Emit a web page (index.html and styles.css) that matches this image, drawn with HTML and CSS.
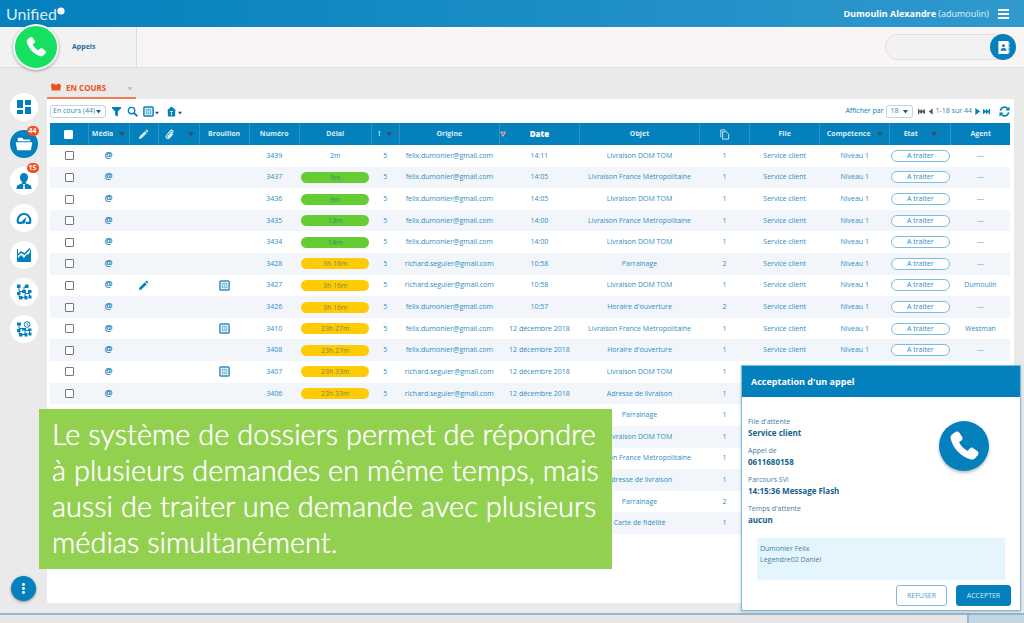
FILE: index.html
```html
<!DOCTYPE html>
<html lang="fr">
<head>
<meta charset="utf-8">
<meta name="viewport" content="width=device-width, initial-scale=1">
<title>Unified - Dossiers en cours</title>
<link rel="stylesheet" href="styles.css">
</head>
<body>
<svg class="sprite" aria-hidden="true">
  <symbol id="i-phone" viewBox="0 0 24 24"><path d="M3.2 3.2 5.8 1.4c.9-.6 2-.4 2.6.5l2.2 3.3c.6.9.3 2-.5 2.6L8.300 9c1.200 2.900 3.600 5.300 6.500 6.700l1.500-1.800c.7-.8 1.800-1 2.700-.3l3.100 2.400c.9.7 1 1.900.3 2.700l-2.100 2.400c-.9 1-2.200 1.300-3.500.9C9.400 19.800 3.900 13.900 2 6.600c-.3-1.300.1-2.600 1.200-3.400Z"/></symbol>
  <symbol id="i-pencil" viewBox="0 0 12 12"><path d="M1 11l.6-2.700L7.500 2.400l2.100 2.100-5.900 5.900ZM8.100 1.800l.6-.6c.4-.4 1-.4 1.400 0l.7.7c.4.4.4 1 0 1.400l-.6.6Z"/></symbol>
  <symbol id="i-draft" viewBox="0 0 12 12"><rect x="1" y="1" width="10" height="10" rx="1" fill="none" stroke="currentColor" stroke-width="1.600"/><path d="M3.500 3.500h5v5h-5Z" fill="none" stroke="currentColor" stroke-width=".8"/><path d="M5 5h2v1H5ZM5 7h2v.7H5Z"/></symbol>
  <symbol id="i-caret" viewBox="0 0 8 8"><path d="M0 1.500h8L4 7Z"/></symbol>
</svg>

<header class="topbar">
  <div class="brand">Unified<svg class="brand-dot" viewBox="0 0 10 10"><circle cx="5" cy="5" r="4.500" fill="#fff"/><path d="m3 5 1.500 1.500L7 4" fill="none" stroke="#9ccbe5"/></svg></div>
  <div class="user"><strong>Dumoulin Alexandre</strong> (adumoulin)</div>
  <button class="menu" aria-label="Menu"><span></span><span></span><span></span></button>
</header>

<div class="subbar">
  <div class="calls">
    <button class="call-btn" aria-label="Téléphone"><svg viewBox="0 0 24 24"><use href="#i-phone"/></svg></button>
    <span>Appels</span>
  </div>
  <div class="search">
    <input type="text" aria-label="Rechercher">
    <button aria-label="Contacts"><svg viewBox="0 0 14 14"><path d="M1.500 0h11v14h-11Z" fill="#fff"/><path d="M12.500 2h1v2h-1zM12.500 6h1v2h-1zM12.500 10h1v2h-1z" fill="#fff"/><circle cx="7" cy="5" r="1.600" fill="#0480bc"/><path d="M4 10.500V9l2-1.500h2L10 9v1.500Z" fill="#0480bc"/></svg></button>
  </div>
</div>

<div class="workspace">
  <nav class="rail">
    <button aria-label="Tableau de bord"><svg viewBox="0 0 16 16"><path d="M1 1h6v8H1zM9 1h6v5H9zM1 11h6v4H1zM9 8h6v7H9z"/></svg></button>
    <button class="active" aria-label="Dossiers"><svg viewBox="0 0 20 16"><path d="M3 5V2.500C3 1.500 3.500 1 4.500 1H8l1.500 2h6c1 0 1.500.5 1.500 1.500V5ZM.8 6h18.400l-1.400 8c-.1.700-.6 1-1.300 1h-13c-.7 0-1.200-.3-1.300-1Z"/></svg><span class="badge">44</span></button>
    <button aria-label="Clients"><svg viewBox="0 0 16 16"><path d="M8 0c2.500 0 4 1.800 4 4.300 0 2.300-1 4-2.200 4.900v1.100L14 12c1 .5 1.500 1.500 1.500 4H9l-.4-3.500.6-1.500H6.800l.6 1.500L7 16H.5C.5 13.500 1 12.500 2 12l4.200-1.700V9.200C5 8.300 4 6.600 4 4.300 4 1.800 5.500 0 8 0Z"/></svg><span class="badge">15</span></button>
    <button aria-label="Supervision"><svg viewBox="0 0 18 16"><path d="M2.300 13.500C1 9 3.500 3.500 9 3.500s8 5.500 6.700 10H11" fill="none" stroke="currentColor" stroke-width="2.400"/><path d="M2 12.300h5v2.400H2ZM11.500 6.500l-1 5.500a2 2 0 1 1-2.600-1.500Z"/></svg></button>
    <button aria-label="Statistiques"><svg viewBox="0 0 16 16"><path d="M1.500 2v12.500h13V3" fill="none" stroke="currentColor"/><path d="m2 8 3-3 3.500 2L14 1.500" fill="none" stroke="currentColor" stroke-width="1.500"/><path d="M2 14v-3l3-3 3 3 3-4 1 1 2-3v9Z"/></svg></button>
    <button aria-label="Flux"><svg viewBox="0 0 16 16"><path d="M3 3v4.500h5M8 7V3h3M3 9.500V13M5 13.500h4V9.500h4.500V12" fill="none" stroke="currentColor"/><path d="M1 .5h3.500V4H1zM9 .5h3.500V4H9zM6 6h4v3H6zM1 8h3.500v3H1zM12 6h3.500v3H12zM3 12h3.500v3.500H3zM8.500 12h3v3.500h-3zM12.500 11.500h3v3h-3z"/></svg></button>
    <button aria-label="Scénarios"><svg viewBox="0 0 16 16"><path d="M3 3v4.500h5M3 9.500V13M5 13.500h4V9.500h4.500V12" fill="none" stroke="currentColor"/><circle cx="11" cy="3.500" r="2.800" fill="none" stroke="currentColor"/><path d="M11 2v2h1.500" fill="none" stroke="currentColor" stroke-width=".8"/><path d="M1 1.500h4v3H1zM6 7h4v2.500H6zM1 8h3.500v3H1zM12 7.500h3.500v2.500H12zM3 12h3.500v3.500H3zM8.500 12h3v3.500h-3zM12.500 11.500h3v3h-3z"/></svg></button>
    <button class="more" aria-label="Plus"><svg viewBox="0 0 16 16"><circle cx="8" cy="3" r="1.800"/><circle cx="8" cy="8" r="1.800"/><circle cx="8" cy="13" r="1.800"/></svg></button>
  </nav>

  <main class="content">
    <div class="tab">
      <svg viewBox="0 0 12 10"><path d="M0 2c0-.6.400-1 1-1h3l1 1h2l1-1h2c.6 0 1 .4 1 1v.5h.5c.4 0 .6.300.5.700L11.200 8.500c-.1.300-.4.500-.7.500h-9c-.3 0-.6-.2-.7-.5Z"/></svg>
      <span>EN COURS</span>
      <button aria-label="Fermer">×</button>
    </div>
    <section class="panel">
      <div class="toolbar">
        <label class="picker filter"><select aria-label="Filtre"><option>En cours (44)</option></select><svg viewBox="0 0 8 8"><use href="#i-caret"/></svg></label>
        <button aria-label="Filtrer"><svg viewBox="0 0 12 12"><path d="M1 1h10v1.500L7.500 6v5.500L4.500 10V6L1 2.500Z"/></svg></button>
        <button aria-label="Chercher"><svg viewBox="0 0 12 12"><circle cx="5" cy="5" r="3.500" fill="none" stroke="currentColor" stroke-width="1.500"/><path d="m7.500 7.500 3.700 3.700" stroke="currentColor" stroke-width="2"/></svg></button>
        <button class="drop" aria-label="Dossier"><svg viewBox="0 0 12 12"><use href="#i-draft"/></svg><svg class="mini" viewBox="0 0 8 8"><use href="#i-caret"/></svg></button>
        <button class="drop" aria-label="Verrou"><svg viewBox="0 0 12 12"><path d="M6 .5 11 5H10v6.500H2V5H1Z"/><path d="M4.500 6h3M6 7v3" stroke="#fff"/></svg><svg class="mini" viewBox="0 0 8 8"><use href="#i-caret"/></svg></button>
        <div class="pager">
          <label for="size">Afficher par</label>
          <span class="picker size"><select id="size"><option>18</option></select><svg viewBox="0 0 8 8"><use href="#i-caret"/></svg></span>
          <button class="off first" aria-label="Première page"><svg viewBox="0 0 8 8"><path d="M0 1h1.500v2.500L4.500 1v2.500L8 1v6L4.500 4.500V7l-3-2.500V7H0Z"/></svg></button>
          <button class="off" aria-label="Page précédente"><svg viewBox="0 0 8 8"><path d="M6.500.5v7L2 4Z"/></svg></button>
          <span>1-18 sur 44</span>
          <button aria-label="Page suivante"><svg viewBox="0 0 8 8"><path d="M1.500 0v8L7 4Z"/></svg></button>
          <button aria-label="Dernière page"><svg viewBox="0 0 8 8"><path d="M8 1H6.500v2.500L3.500 1v2.500L0 1v6l3.500-2.500V7l3-2.500V7H8Z"/></svg></button>
          <button class="refresh" aria-label="Actualiser"><svg viewBox="0 0 12 12"><path d="M1.500 5A4.500 4.500 0 0 1 9.500 3M10.500 7a4.500 4.500 0 0 1-8 2" fill="none" stroke="currentColor" stroke-width="1.800"/><path d="M11.500.5V5H7ZM.5 11.500V7H5Z"/></svg></button>
        </div>
      </div>

      <table class="cases">
        <colgroup><col class="c-check"><col class="c-media"><col class="c-edit"><col class="c-media"><col class="c-mid"><col class="c-mid"><col class="c-delay"><col class="c-prio"><col class="c-origin"><col class="c-date"><col class="c-object"><col class="c-mid"><col class="c-queue"><col class="c-queue"><col class="c-state"><col class="c-agent"></colgroup>
        <thead><tr>
          <th><input type="checkbox" aria-label="Tout sélectionner"></th>
          <th><div class="head">Média<svg class="caret" viewBox="0 0 8 8"><use href="#i-caret"/></svg></div></th>
          <th><svg class="glyph" viewBox="0 0 12 12"><use href="#i-pencil"/></svg></th>
          <th><div class="head wide"><svg class="glyph" viewBox="0 0 12 12"><path d="M8.500 3 4.500 8c-.5.700.3 1.400.9.800L9.300 4c1.400-1.900-.9-3.600-2.300-2L3 6.800c-2 2.600 1.200 5 3.200 2.700L9.500 5.500" fill="none" stroke="currentColor" stroke-width="1.200"/></svg><svg class="caret" viewBox="0 0 8 8"><use href="#i-caret"/></svg></div></th>
          <th>Brouillon</th><th>Numéro</th><th>Délai</th>
          <th><div class="head">!<svg class="caret" viewBox="0 0 8 8"><use href="#i-caret"/></svg></div></th>
          <th>Origine</th>
          <th><div class="head sorted"><svg class="caret" viewBox="0 0 8 8"><path d="M0 1h8L4 8Z" fill="#b8d8ea"/><path d="M1.500 2h5L4 6Z" fill="#f0501e"/></svg><b>Date</b></div></th>
          <th>Objet</th>
          <th><svg class="glyph" viewBox="0 0 12 12"><path d="M4 3h4l2.500 2.500V11H4ZM2 9V1h5" fill="none" stroke="currentColor"/></svg></th>
          <th>File</th>
          <th><div class="head">Compétence<svg class="caret" viewBox="0 0 8 8"><use href="#i-caret"/></svg></div></th>
          <th><div class="head wide">Etat<svg class="caret" viewBox="0 0 8 8"><use href="#i-caret"/></svg></div></th>
          <th>Agent</th>
        </tr></thead>
        <tbody id="rows"></tbody>
      </table>
    </section>
  </main>
</div>
<footer class="frame-end"><div></div></footer>

<p class="caption">Le système de dossiers permet de répondre<br>à plusieurs demandes en même temps, mais<br>aussi de traiter une demande avec plusieurs<br>médias simultanément.</p>

<div class="dialog" role="dialog" aria-labelledby="dlg">
  <h2 id="dlg">Acceptation d'un appel</h2>
  <div class="dialog-body">
    <dl>
      <dt>File d'attente</dt><dd>Service client</dd>
      <dt>Appel de</dt><dd>0611680158</dd>
      <dt>Parcours SVI</dt><dd>14:15:36 Message Flash</dd>
      <dt>Temps d'attente</dt><dd>aucun</dd>
    </dl>
    <div class="ring"><svg viewBox="0 0 24 24"><use href="#i-phone"/></svg></div>
  </div>
  <div class="people">Dumonier Felix<br>Legendre02 Daniel</div>
  <div class="actions"><button>REFUSER</button><button class="primary">ACCEPTER</button></div>
</div>
<script src="app.js"></script>
</body>
</html>
```

FILE: styles.css
```css
:root { --blue: #0480bc; --text: #2f8dc1; --orange: #f0501e; }
* { box-sizing: border-box; }
body { margin: 0; min-height: 100vh; display: flex; flex-direction: column; position: relative; overflow: hidden; background: #eaeaea; color: var(--text); font: 7px/10px "Open Sans", "Noto Sans", sans-serif; }
button { border: 0; padding: 0; background: none; color: inherit; font: inherit; display: flex; align-items: center; justify-content: center; }
svg { display: block; fill: currentColor; }
.sprite { position: absolute; width: 0; height: 0; }

.topbar { height: 27px; display: flex; align-items: center; padding: 0 15px 0 6px; color: #fff; background: linear-gradient(90deg, #0480bc, #3099cd); }
.brand { display: flex; font: 16px/20px Lato, sans-serif; flex: 1; color: #d9edf7; }
.brand-dot { width: 8px; height: 8px; margin: 3px 0 0 0; }
.user { font-size: 9px; color: #e3f1f9; }
.user strong { color: #fff; }
.menu { flex-direction: column; gap: 2px; margin-left: 9px; }
.menu span { width: 11px; height: 2px; background: #fff; }

.subbar { height: 41px; display: flex; justify-content: space-between; align-items: center; background: #f9f5f4; border-bottom: 1px solid #e0dfdf; }
.calls { width: 137px; align-self: stretch; display: flex; align-items: center; gap: 13px; padding-left: 13px; background: #f2f2f2; border-right: 1px solid #dcdcdc; color: #1d6b98; font-weight: 700; }
.call-btn { width: 46px; height: 46px; flex: none; position: relative; z-index: 1; border: 2px solid #f6f6f6; border-radius: 50%; background: #16e060; color: #fff; box-shadow: 0 1px 3px #0005; }
.call-btn svg { width: 22px; }
.search { display: flex; width: 131px; margin-right: 8px; height: 26px; }
.search input { flex: 1; min-width: 0; border: 1px solid #e0e0e0; border-radius: 13px; background: #f2f2f2; margin-right: -24px; }
.search button { width: 26px; border-radius: 50%; background: var(--blue); position: relative; }
.search svg { width: 13px; }

.workspace { flex: 1; display: flex; }
.rail { width: 47px; display: flex; flex-direction: column; align-items: center; gap: 9px; padding: 25px 0 12px; color: var(--blue); }
.rail button { position: relative; width: 28px; height: 28px; border-radius: 50%; background: #fff; }
.rail svg { width: 16px; height: 16px; }
.rail .active, .rail .more { background: var(--blue); color: #fff; }
.rail .active svg { width: 18px; }
.rail .more { width: 25px; height: 25px; margin-top: auto; box-shadow: 0 1px 3px #0006; }
.rail .more svg { width: 13px; height: 13px; }
.badge { position: absolute; top: -4px; right: -1px; width: 12px; height: 10px; border-radius: 5px; background: var(--orange); color: #fff; font-weight: 700; }

.content { flex: 1; min-width: 0; display: flex; flex-direction: column; padding: 0 10px 10px 0; }
.tab { align-self: flex-start; width: 89px; height: 21px; margin-top: 10px; padding: 0 4px; display: flex; align-items: center; gap: 5px; border-bottom: 2px solid #f47a54; color: var(--orange); font-size: 8px; font-weight: 700; }
.tab svg { width: 10px; }
.tab button { margin-left: auto; color: #999; font-weight: 400; }
.panel { flex: 1; background: #fff; padding: 0 4px 0 3px; border-radius: 0 0 3px 3px; }
.toolbar { height: 24px; display: flex; align-items: center; gap: 5px; color: var(--blue); }
.toolbar > button svg { width: 11px; height: 11px; }
.toolbar .drop { gap: 1px; margin-right: 2px; }
.toolbar > .drop .mini { width: 4px; height: 4px; margin-top: 4px; color: #37515f; }
.picker { display: flex; align-items: center; border: 1px solid #b5d7e8; border-radius: 3px; height: 13px; padding: 0 4px 0 2px; }
.picker select { appearance: none; border: 0; padding: 0; background: none; color: #3d7fa3; font: 7px/10px "Open Sans", sans-serif; flex: 1; min-width: 0; }
.picker svg { width: 5px; height: 5px; color: #1c5c80; }
.filter { width: 56px; }
.size { width: 27px; padding-left: 4px; }
.pager { display: flex; align-items: center; gap: 2px; margin-left: auto; }
.pager button svg { width: 7px; height: 7px; }
.pager .off { color: #555; }
.pager .first { margin-left: 3px; }
.pager span { color: #3d7fa3; }
.pager .refresh { margin-left: 7px; }
.pager .refresh svg { width: 11px; height: 11px; }

.cases { width: 100%; height: 411px; table-layout: fixed; border-collapse: collapse; text-align: center; }
.cases th, .cases td { padding: 0; white-space: nowrap; }
.cases th { height: 22px; background: var(--blue); color: #d9edf7; border-right: 1px solid #2b94c8; }
.cases th:last-child { border-right: 0; }
.cases td { height: 21px; }
.cases tbody tr:nth-child(even) { background: #f2f6fb; }
.c-check { width: 38px; } .c-media { width: 41px; } .c-edit { width: 29px; } .c-mid { width: 50px; }
.c-delay { width: 72px; } .c-prio { width: 28px; } .c-origin { width: 100px; } .c-date { width: 80px; }
.c-object { width: 120px; } .c-queue { width: 70px; } .c-state { width: 61px; } .c-agent { width: 59px; }
.head { display: flex; align-items: center; justify-content: center; gap: 6px; }
.head.wide { gap: 13px; }
.head.sorted { display: grid; grid-template-columns: 6px 1fr 6px; gap: 0; font-size: 8px; color: #fff; }
.caret { width: 6px; height: 6px; color: #37515f; }
.glyph { width: 11px; height: 11px; margin: auto; }
.head .glyph { margin: 0; }
.cases input { appearance: none; display: block; width: 9px; height: 9px; margin: auto; border: 1px solid #777; border-radius: 1px; background: #fff; }
.cases th input { border-color: #fff; }
.at { display: block; font-size: 9px; line-height: 10px; font-weight: 700; padding-bottom: 2px; }
.edit { color: var(--blue); }
.delay { display: block; height: 11px; margin: 0 2px; border-radius: 6px; line-height: 11px; }
.delay.green { background: #66cc33; color: #338f5a; }
.delay.amber { background: #ffcb05; color: #7b8a45; }
.state { display: block; height: 12px; margin: 0 1px; border: 1px solid #7dbddd; border-radius: 6px; background: #fff; line-height: 10px; }

.frame-end { height: 10px; border-top: 2px solid #94b8d4; background: #e6e6e6; }
.frame-end div { height: 8px; width: 57px; margin-left: auto; background: #c3d6e2; border-left: 2px solid #94b8d4; }

.caption { position: absolute; left: 39px; top: 409px; width: 573px; margin: 0; padding: 7px 0 9px 13px; background: #92d050; color: #fff; font: 300 29px/36px Lato, sans-serif; text-shadow: 0 0 1px #fff; white-space: nowrap; }

.dialog { position: absolute; right: 3px; bottom: 12px; width: 280px; background: #fff; border: 1px solid #7dbddd; color: #47809e; box-shadow: 0 1px 3px #0003; }
.dialog h2 { margin: 0; padding: 0 9px; background: var(--blue); color: #fff; font-size: 9px; line-height: 31px; }
.dialog-body { display: flex; justify-content: space-between; padding: 19px 31px 0 6px; }
.dialog dl { margin: 0; font-size: 7px; line-height: 11px; }
.dialog dd { margin: 0 0 7px; color: #15618c; font-weight: 700; font-size: 8px; }
.ring { width: 50px; height: 50px; margin-top: 5px; border-radius: 50%; background: var(--blue); color: #fff; display: grid; place-items: center; box-shadow: 0 2px 3px #0004; }
.ring svg { width: 32px; }
.people { margin: 6px 15px 5px; height: 42px; padding: 5px 3px; line-height: 11px; background: #e4f5fd; }
.actions { display: flex; justify-content: flex-end; gap: 9px; padding: 0 9px 4px; }
.actions button { width: 51px; height: 21px; border: 1px solid #7dbddd; border-radius: 3px; color: #4c9dc8; }
.actions .primary { width: 55px; background: var(--blue); border-color: var(--blue); color: #d9edf7; }
```

FILE: app.js
```js
const FELIX = "felix.dumonier@gmail.com";
const RICHARD = "richard.seguier@gmail.com";
const DOM = "Livraison DOM TOM";
const METRO = "Livraison France Metropolitaine";
const DEC = "12 décembre 2018";

// number, delay, colour, origin, date, object, documents, agent, draft, edit
const cases = [
  [3439, "2m", "", FELIX, "14:11", DOM, 1, "---"],
  [3437, "9m", "green", FELIX, "14:05", METRO, 1, "---"],
  [3436, "9m", "green", FELIX, "14:05", DOM, 1, "---"],
  [3435, "13m", "green", FELIX, "14:00", METRO, 1, "---"],
  [3434, "14m", "green", FELIX, "14:00", DOM, 1, "---"],
  [3428, "3h 16m", "amber", RICHARD, "10:58", "Parrainage", 2, "---"],
  [3427, "3h 16m", "amber", RICHARD, "10:58", DOM, 1, "Dumoulin", true, true],
  [3426, "3h 16m", "amber", FELIX, "10:57", "Horaire d'ouverture", 2, "---"],
  [3410, "23h 27m", "amber", FELIX, DEC, METRO, 1, "Westman", true],
  [3408, "23h 27m", "amber", FELIX, DEC, "Horaire d'ouverture", 1, "---"],
  [3407, "23h 33m", "amber", RICHARD, DEC, DOM, 1, "", true],
  [3406, "23h 33m", "amber", RICHARD, DEC, "Adresse de livraison", 1, ""]
];
const pending = [
  ["Parrainage", 1],
  [DOM, 1],
  [METRO, 1],
  ["Adresse de livraison", 1],
  ["Parrainage", 2],
  ["Carte de fidélité", 1]
];

const icon = (id, cls) => `<svg class="glyph ${cls}" viewBox="0 0 12 12"><use href="#${id}"/></svg>`;

const loadedRow = ([num, delay, tone, origin, date, object, docs, agent, draft, edit]) => `<tr>
    <td><input type="checkbox" aria-label="Dossier ${num}"></td>
    <td><span class="at">@</span></td>
    <td>${edit ? icon("i-pencil", "edit") : ""}</td>
    <td></td>
    <td>${draft ? icon("i-draft", "") : ""}</td>
    <td>${num}</td>
    <td><span class="delay ${tone}">${delay}</span></td>
    <td>5</td><td>${origin}</td><td>${date}</td><td>${object}</td><td>${docs}</td>
    ${agent
      ? `<td>Service client</td><td>Niveau 1</td><td><span class="state">A traiter</span></td><td>${agent}</td>`
      : "<td></td><td></td><td></td><td></td>"}
  </tr>`;

const pendingRow = ([object, docs]) => `<tr>
    <td></td><td></td><td></td><td></td><td></td><td></td>
    <td><span class="delay amber"></span></td>
    <td></td><td></td><td></td><td>${object}</td><td>${docs}</td>
    <td></td><td></td><td></td><td></td>
  </tr>`;

document.getElementById("rows").innerHTML =
  cases.map(loadedRow).join("") + pending.map(pendingRow).join("");
```
